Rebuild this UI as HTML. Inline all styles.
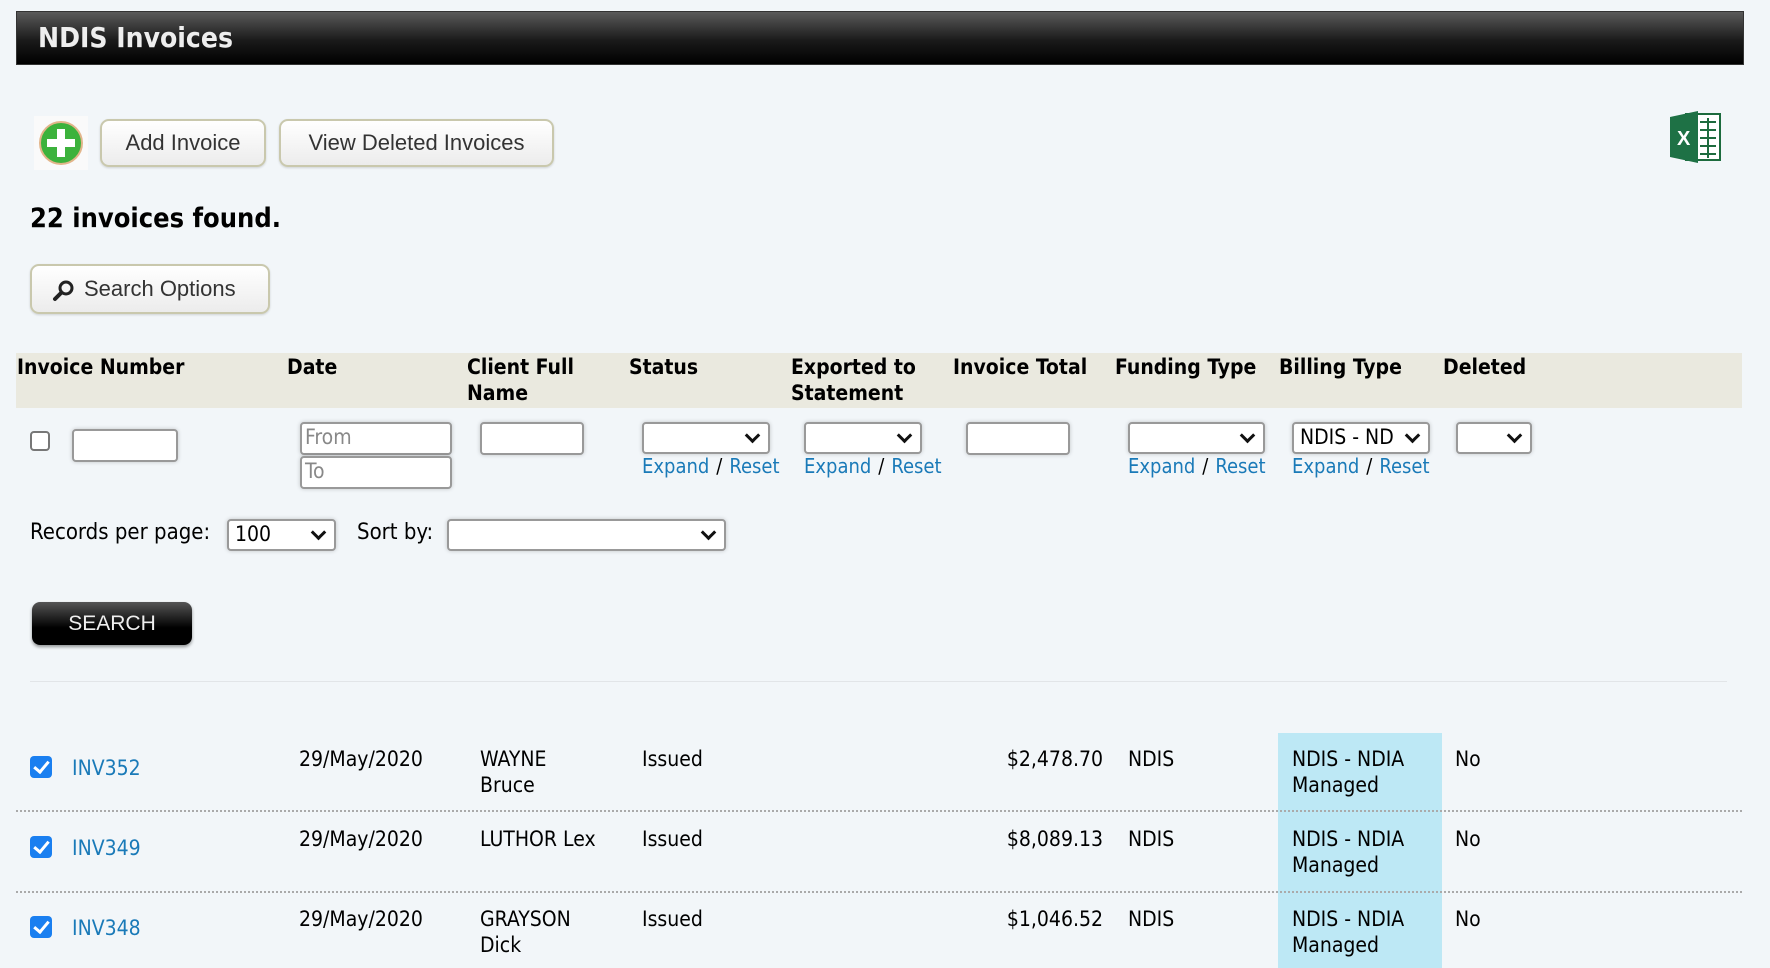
<!DOCTYPE html>
<html><head><meta charset="utf-8"><style>
body{margin:0;width:1770px;height:968px;background:#f2f6f9;position:relative;overflow:hidden;font-family:"DejaVu Sans Condensed","DejaVu Sans","Liberation Sans",sans-serif;color:#000}
.a{position:absolute}
.hdr{left:16px;top:11px;width:1726px;height:52px;background:linear-gradient(#5a5a5a,#1a1a1a 55%,#000);border:1px solid #333}
.hdr span{position:absolute;left:21px;top:9px;color:#eee;font-size:28px;font-weight:bold;font-family:"DejaVu Sans Condensed","Liberation Sans",sans-serif}
.btn{position:absolute;background:linear-gradient(#fff,#ececec);border:2px solid #c9c8ad;border-radius:9px;font-family:"Liberation Sans",sans-serif;font-size:22px;color:#333;box-shadow:0 1px 2px rgba(0,0,0,.15);text-align:center;box-sizing:border-box}
.th{position:absolute;font-weight:bold;font-size:21px;line-height:26px;top:354px}
.inp{position:absolute;background:#fff;border:2px solid #999;border-radius:4px;box-sizing:border-box;box-shadow:0 0 4px rgba(0,0,0,.2);font-size:21px;color:#888;padding-left:3px;line-height:26px}
.sel{position:absolute;background:#fff;border:2px solid #999;border-radius:4px;box-sizing:border-box;box-shadow:0 0 4px rgba(0,0,0,.2);font-size:21px;padding-left:6px;line-height:26px}
.sel:after{content:"";position:absolute;right:10px;top:6px;width:8px;height:8px;border-right:3px solid #111;border-bottom:3px solid #111;transform:rotate(45deg)}
.lk{position:absolute;top:454px;font-size:20px;color:#1a7ab8}
.lk b{font-weight:normal;color:#000;margin:0 7px}
.td{position:absolute;font-size:21px;line-height:26px}
.cb{position:absolute;width:22px;height:22px;background:#1a7ff0;border-radius:4px;left:30px}
.cb:after{content:"";position:absolute;left:7px;top:2px;width:6px;height:12px;border-right:3px solid #fff;border-bottom:3px solid #fff;transform:rotate(40deg)}
.dl{position:absolute;left:16px;width:1726px;border-top:2px dotted #aaa}
</style></head><body>
<div class="a hdr"><span>NDIS Invoices</span></div>
<div class="a" style="left:34px;top:116px;width:54px;height:54px;background:#fafafa"></div>
<svg class="a" style="left:38px;top:120px" width="46" height="46" viewBox="0 0 46 46"><circle cx="23" cy="23" r="21" fill="#3cb23c" stroke="#e2b58a" stroke-width="2"/><rect x="19" y="9" width="8" height="28" fill="#fff"/><rect x="9" y="19" width="28" height="8" fill="#fff"/></svg>
<div class="btn" style="left:100px;top:119px;width:166px;height:48px;line-height:44px">Add Invoice</div>
<div class="btn" style="left:279px;top:119px;width:275px;height:48px;line-height:44px">View Deleted Invoices</div>
<svg class="a" style="left:1666px;top:108px" width="58" height="58" viewBox="0 0 58 58"><rect x="20" y="6" width="34" height="46" fill="#fff" stroke="#1d6b3e" stroke-width="2"/><g stroke="#1d6b3e" stroke-width="2"><line x1="34" y1="14" x2="50" y2="14"/><line x1="34" y1="22" x2="50" y2="22"/><line x1="34" y1="30" x2="50" y2="30"/><line x1="34" y1="38" x2="50" y2="38"/><line x1="34" y1="46" x2="50" y2="46"/><line x1="42" y1="10" x2="42" y2="50"/></g><path d="M4 9 L32 3 L32 55 L4 49Z" fill="#1e7145"/><text x="11" y="37" fill="#fff" font-size="20" font-family="Liberation Sans" font-weight="bold">X</text></svg>
<div class="a" style="left:30px;top:203px;font-size:27px;font-weight:bold">22 invoices found.</div>
<div class="btn" style="left:30px;top:264px;width:240px;height:50px;line-height:46px;text-align:left;padding-left:52px">Search Options</div>
<svg class="a" style="left:52px;top:278px" width="24" height="24" viewBox="0 0 24 24"><circle cx="14" cy="10" r="6" fill="none" stroke="#222" stroke-width="3"/><line x1="9" y1="15" x2="3" y2="21" stroke="#222" stroke-width="4" stroke-linecap="round"/></svg>
<div class="a" style="left:16px;top:353px;width:1726px;height:55px;background:#eae9df"></div>
<div class="th" style="left:17px">Invoice Number</div>
<div class="th" style="left:287px">Date</div>
<div class="th" style="left:467px">Client Full<br>Name</div>
<div class="th" style="left:629px">Status</div>
<div class="th" style="left:791px">Exported to<br>Statement</div>
<div class="th" style="left:953px">Invoice Total</div>
<div class="th" style="left:1115px">Funding Type</div>
<div class="th" style="left:1279px">Billing Type</div>
<div class="th" style="left:1443px">Deleted</div>
<div class="a" style="left:30px;top:431px;width:20px;height:20px;border:2px solid #777;border-radius:4px;background:#fff;box-sizing:border-box"></div>
<div class="inp" style="left:72px;top:429px;width:106px;height:33px"></div>
<div class="inp" style="left:300px;top:422px;width:152px;height:33px">From</div>
<div class="inp" style="left:300px;top:456px;width:152px;height:33px">To</div>
<div class="inp" style="left:480px;top:422px;width:104px;height:33px"></div>
<div class="sel" style="left:642px;top:422px;width:128px;height:32px"></div>
<div class="sel" style="left:804px;top:422px;width:118px;height:32px"></div>
<div class="inp" style="left:966px;top:422px;width:104px;height:33px"></div>
<div class="sel" style="left:1128px;top:422px;width:137px;height:32px"></div>
<div class="sel" style="left:1292px;top:422px;width:138px;height:32px;overflow:hidden">NDIS - ND</div>
<div class="sel" style="left:1456px;top:422px;width:76px;height:32px"></div>
<div class="lk" style="left:642px">Expand<b>/</b>Reset</div>
<div class="lk" style="left:804px">Expand<b>/</b>Reset</div>
<div class="lk" style="left:1128px">Expand<b>/</b>Reset</div>
<div class="lk" style="left:1292px">Expand<b>/</b>Reset</div>
<div class="a" style="left:30px;top:520px;font-size:22px">Records per page:</div>
<div class="sel" style="left:227px;top:519px;width:109px;height:32px">100</div>
<div class="a" style="left:357px;top:520px;font-size:22px">Sort by:</div>
<div class="sel" style="left:447px;top:519px;width:279px;height:32px"></div>
<div class="a" style="left:32px;top:602px;width:160px;height:43px;border-radius:8px;background:linear-gradient(#555,#000 60%);box-shadow:0 2px 3px rgba(0,0,0,.4);color:#eee;font-family:'Liberation Sans',sans-serif;font-size:21px;line-height:43px;text-align:center">SEARCH</div>
<div class="a" style="left:30px;top:681px;width:1697px;border-top:1px solid #e2e5e8"></div>
<div class="a" style="left:1278px;top:733px;width:164px;height:235px;background:#bde8f5"></div>
<div class="dl" style="top:810px"></div>
<div class="dl" style="top:891px"></div>

<div class="cb" style="top:756px"></div>
<div class="td" style="left:72px;top:755px;color:#1a7ab8">INV352</div>
<div class="td" style="left:299px;top:746px">29/May/2020</div>
<div class="td" style="left:480px;top:746px">WAYNE<br>Bruce</div>
<div class="td" style="left:642px;top:746px">Issued</div>
<div class="td" style="left:953px;top:746px;width:150px;text-align:right">$2,478.70</div>
<div class="td" style="left:1128px;top:746px">NDIS</div>
<div class="td" style="left:1292px;top:746px">NDIS - NDIA<br>Managed</div>
<div class="td" style="left:1455px;top:746px">No</div>

<div class="cb" style="top:836px"></div>
<div class="td" style="left:72px;top:835px;color:#1a7ab8">INV349</div>
<div class="td" style="left:299px;top:826px">29/May/2020</div>
<div class="td" style="left:480px;top:826px">LUTHOR Lex</div>
<div class="td" style="left:642px;top:826px">Issued</div>
<div class="td" style="left:953px;top:826px;width:150px;text-align:right">$8,089.13</div>
<div class="td" style="left:1128px;top:826px">NDIS</div>
<div class="td" style="left:1292px;top:826px">NDIS - NDIA<br>Managed</div>
<div class="td" style="left:1455px;top:826px">No</div>

<div class="cb" style="top:916px"></div>
<div class="td" style="left:72px;top:915px;color:#1a7ab8">INV348</div>
<div class="td" style="left:299px;top:906px">29/May/2020</div>
<div class="td" style="left:480px;top:906px">GRAYSON<br>Dick</div>
<div class="td" style="left:642px;top:906px">Issued</div>
<div class="td" style="left:953px;top:906px;width:150px;text-align:right">$1,046.52</div>
<div class="td" style="left:1128px;top:906px">NDIS</div>
<div class="td" style="left:1292px;top:906px">NDIS - NDIA<br>Managed</div>
<div class="td" style="left:1455px;top:906px">No</div>
</body></html>
